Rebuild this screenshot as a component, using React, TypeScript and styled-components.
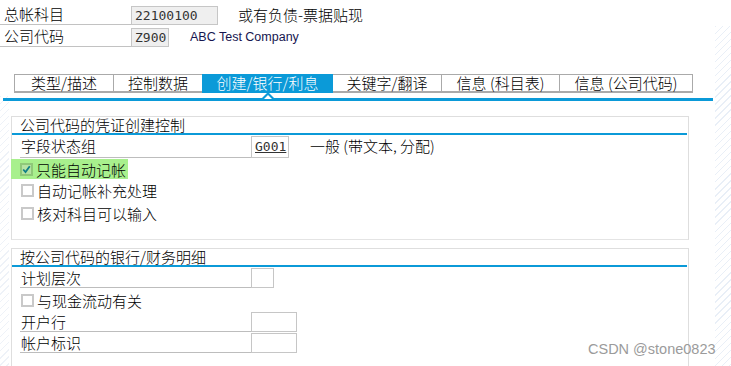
import styled, { createGlobalStyle } from "styled-components";

const GlobalStyle = createGlobalStyle`
  html, body {
    margin: 0;
    padding: 0;
  }
  body {
    background-color: #fff;
    background-image:
      repeating-linear-gradient(135deg, #e9eff7 0 1px, #fff 1px 5px),
      repeating-linear-gradient(135deg, #eef2f8 0 1px, #fff 1px 5px);
    background-repeat: no-repeat;
    background-size: 16px 340px, 9px 270px;
    background-position: right bottom, left bottom;
    min-height: 366px;
    font-family: "Noto Sans CJK SC", "Liberation Sans", sans-serif;
    color: #000;
  }
`;

const CJK = `"Noto Sans CJK SC", "Liberation Sans", sans-serif`;
const MONO = `"DejaVu Sans Mono", "Liberation Mono", monospace`;
const BLUE = "#0b9ad8";

const Screen = styled.div`
  position: relative;
  width: 731px;
  height: 366px;
  overflow: hidden;
  padding-top: 5px;
  box-sizing: border-box;
`;

const HeadRow = styled.div`
  display: flex;
  align-items: flex-end;
  height: 20px;
  margin-bottom: 2px;
`;

const HeadLabel = styled.div`
  width: 127px;
  padding-left: 4px;
  height: 19px;
  border-bottom: 1px solid #c2c2c2;
  font: 300 15px/18px ${CJK};
`;

const KeyBox = styled.div<{ $w: number }>`
  width: ${(p) => p.$w}px;
  height: 19px;
  box-sizing: border-box;
  border: 1px solid #c6c6c6;
  background: #efefef;
  font: 13px/17px ${MONO};
  padding-left: 3px;
  color: #333;
`;

const HeadText = styled.div`
  margin-left: 20px;
  font: 300 15px/18px ${CJK};
  height: 19px;
`;

const CompanyName = styled.div`
  margin-left: 21px;
  font: 12.5px/18px "Liberation Sans", Arial, sans-serif;
  color: #16164f;
  height: 19px;
`;

const TabStrip = styled.div`
  display: flex;
  margin: 27px 0 0 14px;
  height: 19px;
`;

const Tab = styled.div<{ $w: number; $active?: boolean }>`
  position: relative;
  width: ${(p) => p.$w}px;
  box-sizing: border-box;
  height: 19px;
  text-align: center;
  font: 300 15px/16px ${CJK};
  border: 1px solid #aaaaaa;
  border-bottom-width: 2px;
  border-left-width: ${(p) => (p.$active ? 0 : 1)}px;
  border-right-width: ${(p) => (p.$active ? 0 : 1)}px;
  margin-right: -1px;
  background: ${(p) => (p.$active ? BLUE : "#fff")};
  border-color: ${(p) => (p.$active ? BLUE : "#aaaaaa")};
  color: ${(p) => (p.$active ? "#fff" : "#000")};
  z-index: ${(p) => (p.$active ? 1 : 0)};
`;

const Caret = styled.svg`
  position: absolute;
  left: 50%;
  bottom: -8px;
  margin-left: -7px;
`;

const TabRule = styled.div`
  margin: 5px 0 0 3px;
  width: 710px;
  height: 3px;
  background: ${BLUE};
`;

const Group = styled.div<{ $top: number; $h: number }>`
  margin: ${(p) => p.$top}px 0 0 11px;
  width: 678px;
  height: ${(p) => p.$h}px;
  box-sizing: border-box;
  border: 1px solid #dedede;
  border-bottom-color: #e4e4e4;
`;

const GroupTitle = styled.div`
  padding-left: 8px;
  height: 16px;
  font: 300 15px/15px ${CJK};
`;

const GroupRule = styled.div`
  margin: 0 1px 1px 0;
  height: 2px;
  background: ${BLUE};
`;

const FieldRow = styled.div<{ $h: number }>`
  display: flex;
  align-items: stretch;
  padding-left: 8px;
  height: ${(p) => p.$h}px;
  margin-bottom: 1px;
`;

const FieldLabel = styled.div`
  width: 231px;
  box-sizing: border-box;
  border-bottom: 1px solid #bdbdbd;
  font: 300 15px/19px ${CJK};
  padding-left: 1px;
`;

const InputBox = styled.div<{ $w: number }>`
  width: ${(p) => p.$w}px;
  box-sizing: border-box;
  border: 1px solid #c6c6c6;
  background: #fff;
  font: 13px/19px ${MONO};
  padding-left: 3px;
  color: #333;
  text-decoration: underline;
`;

const FieldText = styled.div`
  margin-left: 21px;
  font: 300 15px/19px ${CJK};
`;

const CheckRow = styled.div<{ $hl?: boolean }>`
  display: flex;
  align-items: center;
  width: fit-content;
  height: ${(p) => (p.$hl ? 20 : 23)}px;
  padding: 0 2px 0 8px;
  margin-left: ${(p) => (p.$hl ? -1 : 0)}px;
  background: ${(p) => (p.$hl ? "#a8f08d" : "transparent")};
  font: 300 15px/19px ${CJK};
`;

const Box = styled.span<{ $checked?: boolean }>`
  display: inline-flex;
  align-items: center;
  justify-content: center;
  width: 13px;
  height: 13px;
  box-sizing: border-box;
  border: 2px solid ${(p) => (p.$checked ? "#8fc879" : "#c9c9c9")};
  background: ${(p) => (p.$checked ? "#b6e3a3" : "#fff")};
  margin: 0 3px 0 1px;
`;

const Watermark = styled.div`
  position: absolute;
  left: 588px;
  top: 341px;
  font: 14.5px/16px "Liberation Sans", Arial, sans-serif;
  color: #9b9b9b;
`;

function CheckBox({ checked }: { checked?: boolean }) {
  return (
    <Box $checked={checked}>
      {checked && (
        <svg width="11" height="11" viewBox="0 0 11 11">
          <path d="M1.5 5.5 L4.3 8.6 L9.5 1.5" fill="none" stroke="#117f86" strokeWidth="2.2" />
        </svg>
      )}
    </Box>
  );
}

const tabs = [
  { label: "类型/描述", w: 100 },
  { label: "控制数据", w: 90 },
  { label: "创建/银行/利息", w: 131, active: true },
  { label: "关键字/翻译", w: 110 },
  { label: "信息 (科目表)", w: 119 },
  { label: "信息 (公司代码)", w: 134 },
];

export default function App() {
  return (
    <>
      <GlobalStyle />
      <Screen>
        <HeadRow>
          <HeadLabel>总帐科目</HeadLabel>
          <KeyBox $w={87}>22100100</KeyBox>
          <HeadText>或有负债-票据贴现</HeadText>
        </HeadRow>
        <HeadRow>
          <HeadLabel>公司代码</HeadLabel>
          <KeyBox $w={38}>Z900</KeyBox>
          <CompanyName>ABC Test Company</CompanyName>
        </HeadRow>

        <TabStrip>
          {tabs.map((t) => (
            <Tab key={t.label} $w={t.w} $active={t.active}>
              {t.label}
              {t.active && (
                <Caret width="14" height="8" viewBox="0 0 14 8">
                  <polygon points="0,8 7,1 14,8" fill={BLUE} />
                  <polygon points="3,8 7,4 11,8" fill="#fff" />
                </Caret>
              )}
            </Tab>
          ))}
        </TabStrip>
        <TabRule />

        <Group $top={15} $h={124}>
          <GroupTitle>公司代码的凭证创建控制</GroupTitle>
          <GroupRule />
          <FieldRow $h={22}>
            <FieldLabel>字段状态组</FieldLabel>
            <InputBox $w={38}>G001</InputBox>
            <FieldText>一般 (带文本, 分配)</FieldText>
          </FieldRow>
          <CheckRow $hl>
            <CheckBox checked />
            只能自动记帐
          </CheckRow>
          <CheckRow>
            <CheckBox />
            自动记帐补充处理
          </CheckRow>
          <CheckRow>
            <CheckBox />
            核对科目可以输入
          </CheckRow>
        </Group>

        <Group $top={8} $h={130}>
          <GroupTitle>按公司代码的银行/财务明细</GroupTitle>
          <GroupRule />
          <FieldRow $h={20}>
            <FieldLabel>计划层次</FieldLabel>
            <InputBox $w={23} />
          </FieldRow>
          <CheckRow>
            <CheckBox />
            与现金流动有关
          </CheckRow>
          <FieldRow $h={20}>
            <FieldLabel>开户行</FieldLabel>
            <InputBox $w={46} />
          </FieldRow>
          <FieldRow $h={20}>
            <FieldLabel>帐户标识</FieldLabel>
            <InputBox $w={46} />
          </FieldRow>
        </Group>

        <Watermark>CSDN @stone0823</Watermark>
      </Screen>
    </>
  );
}
